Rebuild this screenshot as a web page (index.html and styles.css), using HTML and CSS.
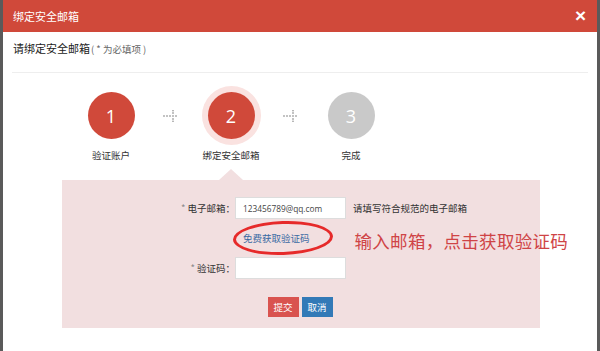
FILE: index.html
```html
<!DOCTYPE html>
<html>
<head>
  <title>绑定安全邮箱</title>
  <link rel="stylesheet" href="styles.css">
</head>
<body>
  <div class="modal">
    <div class="modal-header">
      <span class="modal-title">绑定安全邮箱</span>
      <span class="close">&times;</span>
    </div>
    <div class="modal-body">
      <div class="tip"><b>请绑定安全邮箱</b><span class="muted">( * 为必填项 )</span></div>

      <!-- steps -->
      <div class="steps">
        <div class="step done">
          <div class="circle">1</div>
          <div class="step-name">验证账户</div>
        </div>
        <div class="arrow">
          <svg width="16" height="12" viewBox="0 0 16 12">
            <g fill="#777">
              <circle cx="1" cy="6" r="0.8"/><circle cx="4" cy="6" r="0.8"/><circle cx="7" cy="6" r="0.8"/>
              <circle cx="10" cy="6" r="0.8"/><circle cx="13" cy="6" r="0.8"/>
              <circle cx="10" cy="3" r="0.8"/><circle cx="10" cy="9" r="0.8"/>
              <circle cx="10" cy="0.8" r="0.7"/><circle cx="10" cy="11.2" r="0.7"/>
            </g>
          </svg>
        </div>
        <div class="step current">
          <div class="circle">2</div>
          <div class="step-name">绑定安全邮箱</div>
        </div>
        <div class="arrow">
          <svg width="16" height="12" viewBox="0 0 16 12">
            <g fill="#777">
              <circle cx="1" cy="6" r="0.8"/><circle cx="4" cy="6" r="0.8"/><circle cx="7" cy="6" r="0.8"/>
              <circle cx="10" cy="6" r="0.8"/><circle cx="13" cy="6" r="0.8"/>
              <circle cx="10" cy="3" r="0.8"/><circle cx="10" cy="9" r="0.8"/>
              <circle cx="10" cy="0.8" r="0.7"/><circle cx="10" cy="11.2" r="0.7"/>
            </g>
          </svg>
        </div>
        <div class="step todo">
          <div class="circle">3</div>
          <div class="step-name">完成</div>
        </div>
      </div>

      <!-- form -->
      <div class="form-box">
        <div class="form-row">
          <label class="form-label"><i>*</i> 电子邮箱：</label>
          <input class="form-input" type="text" value="123456789@qq.com">
          <span class="hint">请填写符合规范的电子邮箱</span>
        </div>
        <div class="form-row code-row">
          <span class="form-label"></span>
          <a class="get-code" href="#">免费获取验证码</a>
          <span class="note">输入邮箱，点击获取验证码</span>
        </div>
        <div class="form-row">
          <label class="form-label"><i>*</i> 验证码：</label>
          <input class="form-input" type="text">
        </div>
        <div class="buttons">
          <button class="btn btn-red">提交</button>
          <button class="btn btn-blue">取消</button>
        </div>
      </div>
    </div>
  </div>
</body>
</html>
```

FILE: styles.css
```css
body {
  margin: 0;
  background-color: #5a5a5a;
  font-family: "Noto Sans CJK SC", "Liberation Sans", sans-serif;
  font-size: 12px;
  color: #333;
}
.modal {
  margin: 0 3px;
  height: 351px;
  background-color: #ffffff;
  overflow: hidden;
}
.modal-header {
  height: 32px;
  background-color: #d0493a;
  color: #fff;
  display: flex;
  align-items: center;
  justify-content: space-between;
  padding: 0 11px 0 10px;
}
.modal-title {
  font-size: 11px;
}
.close {
  font-size: 19px;
  font-weight: bold;
  font-family: "Liberation Sans", sans-serif;
  line-height: 1;
  margin-top: -2px;
}
.modal-body {
  padding: 0 9px;
}
.tip {
  height: 40px;
  line-height: 33px;
  border-bottom: 1px solid #eee;
  font-size: 11px;
  padding-left: 1px;
}
.tip b {
  font-weight: normal;
  color: #222;
}
.tip .muted {
  margin-left: 1px;
  font-size: 9.5px;
  color: #666;
}

/* steps */
.steps {
  display: flex;
  margin-left: 59px;
  padding-top: 19px;
}
.step {
  width: 80px;
  display: flex;
  flex-direction: column;
  align-items: center;
}
.circle {
  width: 47px;
  height: 47px;
  border-radius: 50%;
  color: #fff;
  font-size: 18px;
  font-family: "Open Sans", sans-serif;
  display: flex;
  align-items: center;
  justify-content: center;
}
.done .circle,
.current .circle {
  background-color: #d0493a;
}
.current .circle {
  box-shadow: 0 0 0 6px #fae2e0;
}
.todo .circle {
  background-color: #c9c9c9;
}
.step-name {
  margin-top: 9px;
  font-size: 9.5px;
  line-height: 14px;
  color: #333;
}
.arrow {
  width: 40px;
  height: 47px;
  display: flex;
  align-items: center;
  justify-content: center;
}

/* form */
.form-box {
  position: relative;
  margin: 18px 0 0 50px;
  width: 478px;
  height: 148px;
  background-color: #f2dfe0;
  box-sizing: border-box;
  padding-top: 17px;
}
.form-box::before {
  content: "";
  position: absolute;
  top: -11px;
  left: 157px;
  border-left: 12px solid transparent;
  border-right: 12px solid transparent;
  border-bottom: 11px solid #f2dfe0;
}
.form-row {
  display: flex;
  align-items: center;
  height: 22px;
}
.form-label {
  flex: none;
  width: 173px;
  text-align: right;
  font-size: 9.5px;
  color: #333;
  white-space: nowrap;
}
.form-label i {
  font-style: normal;
  color: #888;
}
.form-input {
  flex: none;
  width: 111px;
  height: 22px;
  box-sizing: border-box;
  border: 1px solid #ddd;
  background: #fff;
  padding: 0 7px;
  font-family: "Open Sans", sans-serif;
  font-size: 8.3px;
  color: #444;
  outline: none;
}
.hint {
  margin-left: 7px;
  font-size: 9.5px;
  color: #333;
  white-space: nowrap;
}
.code-row {
  height: 38px;
}
.get-code {
  flex: none;
  position: relative;
  margin-left: 8px;
  font-size: 9.5px;
  color: #3a6aa3;
  text-decoration: none;
  line-height: 14px;
  white-space: nowrap;
}
.get-code::after {
  content: "";
  position: absolute;
  left: -10px;
  top: -10px;
  width: 94px;
  height: 28px;
  border: 3px solid #e62a2a;
  border-radius: 50%;
  transform: rotate(-2deg);
}
.note {
  margin: 4px 0 0 45px;
  font-size: 17.5px;
  color: #cf4446;
  white-space: nowrap;
  letter-spacing: 0.3px;
}
.buttons {
  display: flex;
  justify-content: center;
  gap: 3px;
  margin-top: 18px;
  margin-left: -2px;
}
.btn {
  width: 31px;
  height: 20px;
  border: none;
  padding: 0;
  color: #fff;
  font-family: "Noto Sans CJK SC", sans-serif;
  font-size: 9.5px;
  cursor: pointer;
}
.btn-red {
  background-color: #d9534f;
}
.btn-blue {
  background-color: #337ab7;
}
```
